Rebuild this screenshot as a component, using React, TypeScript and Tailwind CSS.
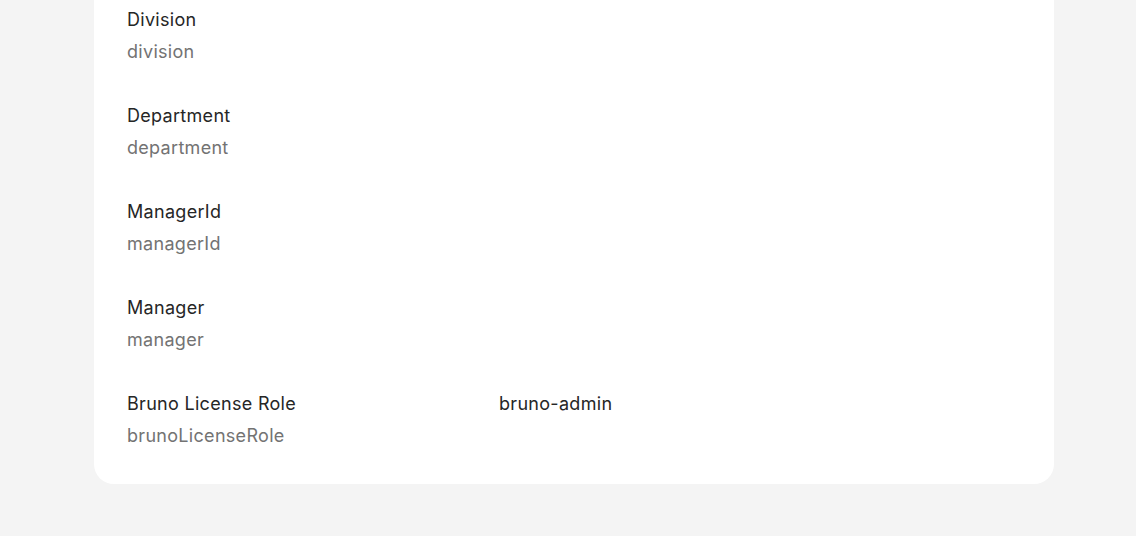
import React from "react";

type Field = { label: string; key: string; value?: string };

const fields: Field[] = [
  { label: "Division", key: "division" },
  { label: "Department", key: "department" },
  { label: "ManagerId", key: "managerId" },
  { label: "Manager", key: "manager" },
  { label: "Bruno License Role", key: "brunoLicenseRole", value: "bruno-admin" },
];

export default function App() {
  return (
    <div
      className="min-h-[536px] w-full bg-[#f4f4f4]"
      style={{ fontFamily: "Inter, 'Noto Sans', sans-serif" }}
    >
      <div className="ml-[94px] w-[960px] rounded-b-[20px] bg-white pl-[33px] pr-[32px] pt-[6px] pb-[34px]">
        <div className="flex flex-col gap-[36px]">
          {fields.map((f) => (
            <div key={f.key} className="flex tracking-[0.3px]">
              <div className="flex w-[372px] flex-col gap-[4px]">
                <span className="text-[18px] leading-[28px] text-[#262626]">{f.label}</span>
                <span className="text-[18px] leading-[28px] text-[#737373]">{f.key}</span>
              </div>
              {f.value && (
                <span className="text-[18px] leading-[28px] text-[#262626]">{f.value}</span>
              )}
            </div>
          ))}
        </div>
      </div>
    </div>
  );
}
